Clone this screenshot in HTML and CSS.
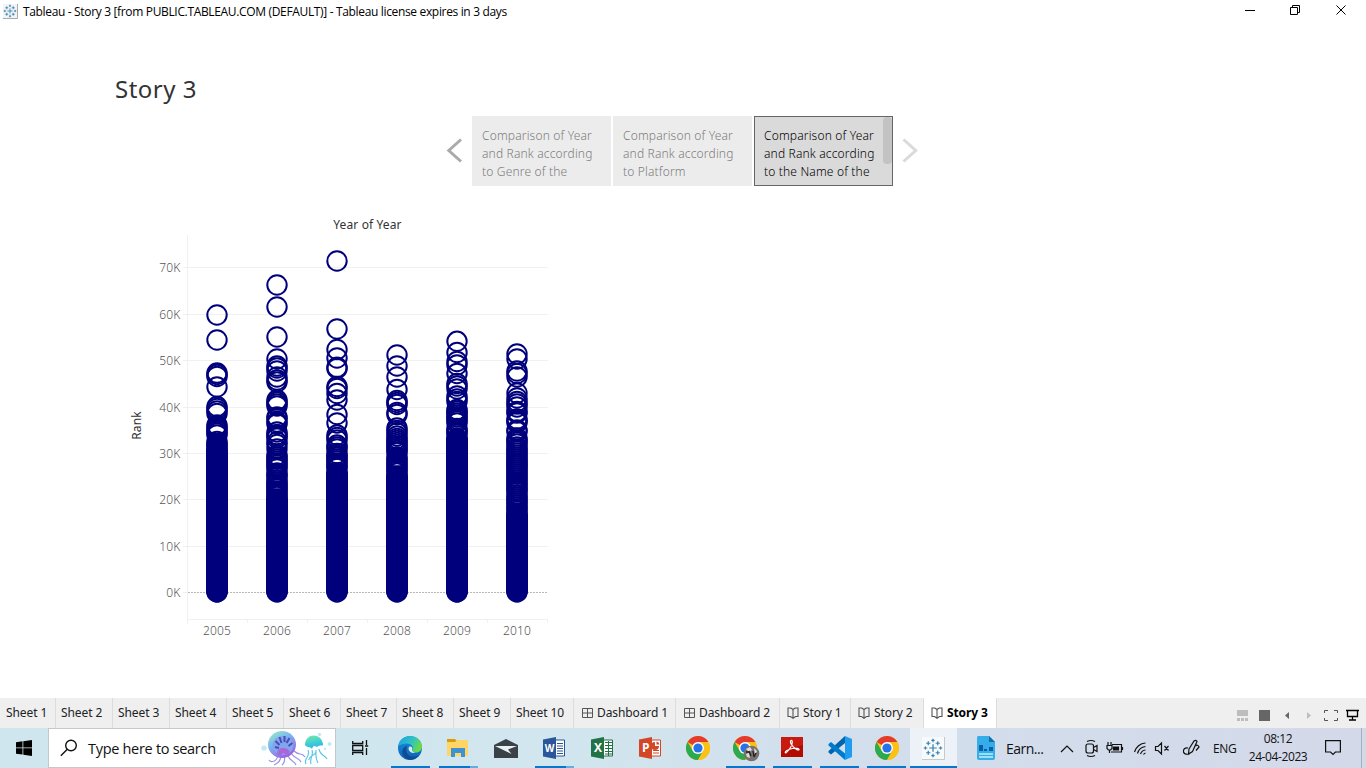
FILE: index.html
```html
<!DOCTYPE html>
<html lang="en">
<head>
<meta charset="utf-8">
<title>Tableau - Story 3</title>
<link rel="stylesheet" href="styles.css">
</head>
<body>
<svg class="defs" width="0" height="0" aria-hidden="true">
  <defs>
    <linearGradient id="bell" x1="0" y1="0" x2=".6" y2="1"><stop offset="0" stop-color="#a0f4b8"/><stop offset=".45" stop-color="#7ab7f3"/><stop offset="1" stop-color="#9a62dc"/></linearGradient>
    <linearGradient id="bell2" x1="0" y1="0" x2=".3" y2="1"><stop offset="0" stop-color="#76ecaa"/><stop offset="1" stop-color="#22b9ec"/></linearGradient>
    <linearGradient id="edgeTop" x1="0" y1="0" x2="1" y2=".4"><stop offset="0" stop-color="#1c9fe0"/><stop offset=".6" stop-color="#2fc2c4"/><stop offset="1" stop-color="#69d84c"/></linearGradient>
    <linearGradient id="edgeLow" x1="0" y1="0" x2="0" y2="1"><stop offset="0" stop-color="#1593de"/><stop offset="1" stop-color="#0c60b8"/></linearGradient>
    <symbol id="chrome" viewBox="0 0 24 24">
      <circle cx="12" cy="12" r="12" fill="#fbc116"/>
      <path d="M12 12 1.600 6A12 12 0 0 1 22.400 6Z" fill="#e33b2e"/>
      <path d="M1.600 6A12 12 0 0 0 12 24L17.200 15 12 12 6.800 15Z" fill="#2da94f"/>
      <path d="M12 6h10.400A12 12 0 0 1 12 24l5.200-9Z" fill="#fbc116"/>
      <circle cx="12" cy="12" r="6" fill="#fff"/><circle cx="12" cy="12" r="4.600" fill="#2672e8"/>
    </symbol>
    <symbol id="tableau" viewBox="0 0 20 20">
      <path d="M10 6v8M6 10h8M10 0v4M8.300 2h3.400M10 16v4M8.300 18h3.400M0 10h4M2 8.300v3.400M16 10h4M18 8.300v3.400M5 2.800v4.400M2.800 5h4.400M15 2.800v4.400M12.800 5h4.400M5 12.800v4.400M2.800 15h4.400M15 12.800v4.400M12.800 15h4.400" fill="none" stroke="#3583b0" stroke-width="1.300"/>
    </symbol>
    <symbol id="grid" viewBox="0 0 12 12"><path d="M1.500 1.500h10v9h-10zM6.500 1.500v9M1.500 6h10" fill="none" stroke="#555"/></symbol>
    <symbol id="book" viewBox="0 0 12 12"><path d="M1 1h2.800L6 2.500 8.200 1H11v8.500H8.500L6 11.300 3.500 9.500H1zM6 2.500v8.500" fill="none" stroke="#555" stroke-width="1.100"/></symbol>
  </defs>
</svg>
<div class="window">
  <header class="titlebar">
    <svg class="app-icon" width="15" height="15" viewBox="0 0 15 15"><path d="M0 0h15v15H0z" fill="#f1f3f4"/><path d="M0 14.500h14.500V0" fill="none" stroke="#aaa"/><use href="#tableau" x=".5" y=".5" width="13" height="13"/></svg>
    <span class="title">Tableau - Story 3 [from PUBLIC.TABLEAU.COM (DEFAULT)] - Tableau license expires in 3 days</span>
    <svg class="controls" width="136" height="22" viewBox="1230 0 136 22" fill="none" stroke="#000"><path d="M1245 10.500h10M1290.500 7.500h7v7h-7zM1292.500 7.500v-2h7v7h-2M1336.500 5.500l9 9M1345.500 5.500l-9 9"/></svg>
  </header>
  <main class="story">
    <h1>Story 3</h1>
    <nav class="points">
      <svg width="26" height="70" viewBox="0 0 26 70"><path d="M15 23.500 2.800 34.500 15 45.500" fill="none" stroke="#aaa" stroke-width="3"/></svg>
      <div class="point">Comparison of Year<br>and Rank according<br>to Genre of the</div>
      <div class="point">Comparison of Year<br>and Rank according<br>to Platform</div>
      <div class="point active">Comparison of Year<br>and Rank according<br>to the Name of the<i class="thumb"></i></div>
      <svg class="next" width="26" height="70" viewBox="0 0 26 70"><path d="M11.500 23.500 23.700 34.500 11.500 45.500" fill="none" stroke="#dadada" stroke-width="3"/></svg>
    </nav>
    <svg class="chart" width="440" height="440" viewBox="120 210 440 440">
      <g stroke="#f0f0f0" fill="none">
        <path d="M187.500 235v389M183 267.500h365M183 314.500h365M183 360.500h365M183 407.500h365M183 453.500h365M183 499.500h365M183 546.500h365M183 592.500h5M187 619.500h361M247.500 619v4M307.500 619v4M367.500 619v4M427.500 619v4M487.500 619v4M547.500 619v4"/>
        <path d="M188 592.500h359" stroke="#b8b8b8" stroke-dasharray="2 1"/>
      </g>
      <g id="marks" class="marks"></g>
      <g class="axis end">
        <text x="180.500" y="272">70K</text><text x="180.500" y="319">60K</text><text x="180.500" y="365">50K</text><text x="180.500" y="412">40K</text><text x="180.500" y="458">30K</text><text x="180.500" y="504">20K</text><text x="180.500" y="551">10K</text><text x="180.500" y="597">0K</text>
      </g>
      <g class="axis mid">
        <text x="217" y="635">2005</text><text x="277" y="635">2006</text><text x="337" y="635">2007</text><text x="397" y="635">2008</text><text x="457" y="635">2009</text><text x="517" y="635">2010</text>
      </g>
      <text class="label" x="367.500" y="229">Year of Year</text>
      <text class="label" transform="translate(141 425.500) rotate(-90)">Rank</text>
    </svg>
  </main>
  <div class="tabs">
    <span class="tab first">Sheet 1</span><span class="tab">Sheet 2</span><span class="tab">Sheet 3</span><span class="tab">Sheet 4</span><span class="tab">Sheet 5</span><span class="tab">Sheet 6</span><span class="tab seven">Sheet 7</span><span class="tab">Sheet 8</span><span class="tab">Sheet 9</span><span class="tab ten">Sheet 10</span>
    <span class="tab dash"><svg width="12" height="12"><use href="#grid"/></svg>Dashboard 1</span><span class="tab dash two"><svg width="12" height="12"><use href="#grid"/></svg>Dashboard 2</span>
    <span class="tab st"><svg width="12" height="12"><use href="#book"/></svg>Story 1</span><span class="tab st two"><svg width="12" height="12"><use href="#book"/></svg>Story 2</span><span class="tab st current"><svg width="12" height="12"><use href="#book"/></svg>Story 3</span>
    <svg class="view-tools" width="136" height="30" viewBox="1230 698 136 30">
      <path d="M1237 710h11v6h-11zM1237 718h3v3h-3zM1241 718h3v3h-3zM1245 718h3v3h-3z" fill="#bdbdbd"/>
      <path d="M1259 710h11v11h-11zM1289 712v7l-4-3.500z" fill="#666"/><path d="M1307 712v7l4-3.500z" fill="#bdbdbd"/>
      <path d="M1324.500 713v-2.500h3.500M1334 710.500h3.500v2.500M1337.500 718v2.500h-3.500M1328 720.500h-3.500v-2.500" fill="none" stroke="#555"/>
      <path d="M1346 710.500h13M1347.500 710.500v6h10v-6M1352.500 716.500v3M1349 720h7" fill="none" stroke="#000" stroke-width="1.300"/>
    </svg>
  </div>
  <footer class="taskbar">
    <div class="start"><svg width="16" height="16" viewBox="0 0 16 16"><path d="M0 2.200 6.500 1.300V7.500H0zM7.300 1.200 16 0v7.500H7.300zM0 8.300h6.500v6.300L0 13.700zM7.300 8.300H16V16l-8.700-1.300z"/></svg></div>
    <div class="search">
      <svg width="18" height="18" viewBox="0 0 18 18" fill="none" stroke="#111" stroke-width="1.400"><circle cx="11" cy="6.500" r="5.300"/><path d="M7.300 10.300.8 16.800"/></svg>
      <span>Type here to search</span>
      <svg class="jelly" width="72" height="36" viewBox="260 730 72 36">
        <g fill="#bfe9f4"><circle cx="264" cy="748" r="2.600"/><circle cx="319.500" cy="734.500" r="1.700"/><circle cx="329.500" cy="744" r="2"/><circle cx="325" cy="749" r="1.200"/></g>
        <path d="M278 755c-1 7-7 8-9 5M281 755c0 6-3 8-7 10M284 755c2 7-1 9-2 10M287 754c3 8 8 7 9 11M291 753c3 6 8 4 10 9M294 751c5 5 8 1 11 6" fill="none" stroke="#9b93e6" stroke-width="1.200"/>
        <ellipse cx="282" cy="744.500" rx="14" ry="13.500" fill="url(#bell)"/>
        <ellipse cx="283" cy="745.500" rx="10.500" ry="9.500" fill="#83a5ee"/>
        <path d="M275 747l4 1M275.500 741l4 4M279.500 737l2 6M284.500 736v6M289.500 738l-3 5M292.500 743l-4 3" stroke="#464fb6" stroke-width="2"/>
        <path d="M277 753q1-5 6-5t7 4l-3 3-4-2-3 3z" fill="#a967d9"/>
        <path d="M308 750c3 7-5 8-2 14M312 750c2 6-3 8-1 14M316 750c0 7-1 8 2 13M319 749c1 7 5 5 8 10M316 752c-1 4-8 4-7 8" fill="none" stroke="#5ac8e7" stroke-width="1.200"/>
        <path d="M305 745c0-12 16-13 18-1 1 3-4 0-6 3-3-2-4-1-5 2-2-3-5-1-7-4z" fill="url(#bell2)"/>
      </svg>
    </div>
    <div class="app taskview"><svg width="17" height="16" viewBox="0 0 17 16" fill="none" stroke="#111" stroke-width="1.300"><path d="M.7 1v2.500h10V1M.7 15v-2.500h10V15M.7 5.500h10v5H.7zM14.500 0v5M14.500 8v7M13 6h3.200"/></svg></div>
    <div class="app run"><svg width="24" height="24" viewBox="0 0 24 24"><circle cx="12" cy="12" r="12" fill="url(#edgeLow)"/><path d="M.2 10C1.500 3.500 6.500 0 12 0c7 0 12 5 12 10.500 0 4-3 6-6.500 6-3 0-4.500-1.200-3-2.500C16 12 14 7.500 9 7.500 5 7.500 1.500 9 .2 10z" fill="url(#edgeTop)"/><path d="M8.500 12c-1.500 6 4 11 12.500 7.500-3 4-9 5.500-13 3C2 18 4 11 9.500 9.500 8.500 10.500 8.500 11 8.500 12z" fill="#134a91"/><path d="M11.500 10.500c2-.5 3.500 1 2.700 3-.5 1.500.5 3 3.300 3-2.500 1-6 .3-6.800-3-.3-1.200 0-2.200.8-3z" fill="#d7edf4"/></svg></div>
    <div class="app run stack"><svg width="22" height="20" viewBox="0 0 22 20"><path d="M0 1h8l2 2v3H0z" fill="#d99a0b"/><path d="M0 4h8l2-2h11v16H0z" fill="#ffd566"/><path d="M4 19v-9h14v9h-4v-4H8v4z" fill="#3d92d4"/></svg></div>
    <div class="app"><svg width="24" height="19" viewBox="0 0 24 19"><path d="M0 6 12 0l12 6v13H0z" fill="#3a4248"/><path d="M1 7h22l-9 3.500 3.500 4.500z" fill="#e9f1f4"/></svg></div>
    <div class="app run stack"><svg width="22" height="22" viewBox="0 0 22 22"><path d="M11 3h10.500v16H11z" fill="#fff" stroke="#2b579a"/><path d="M14 6.500h6M14 9h6M14 11.500h6M14 14h6M14 16.500h6" stroke="#2b579a"/><path d="M0 2.500 13 0v22L0 19.500z" fill="#2b579a"/><text x="1.800" y="15" class="logo">W</text></svg></div>
    <div class="app"><svg width="22" height="22" viewBox="0 0 22 22"><path d="M11 3h10.500v16H11z" fill="#fff" stroke="#217346"/><path d="M14 5.500h7M14 8.500h7M14 11.500h7M14 14.500h7M14 17h7M17.500 4v15" stroke="#217346"/><path d="M0 2.500 13 0v22L0 19.500z" fill="#217346"/><text x="3" y="15" class="logo x">X</text></svg></div>
    <div class="app"><svg width="22" height="22" viewBox="0 0 22 22"><path d="M11 3h10.500v16H11z" fill="#fff" stroke="#d24726"/><path d="M14 13.500h6M14 16h6" stroke="#d24726"/><path d="M16 5v4h4a4 4 0 1 1-4-4zM17.500 4.500a3.500 3.500 0 0 1 3 3h-3z" fill="#d24726"/><path d="M0 2.500 13 0v22L0 19.500z" fill="#d24726"/><text x="3" y="15" class="logo x">P</text></svg></div>
    <div class="app"><svg width="24" height="24"><use href="#chrome"/></svg></div>
    <div class="app narrow run"><svg class="wide" width="28" height="28" viewBox="0 0 28 28"><use href="#chrome" x="1" y="2" width="24" height="24"/><circle cx="19.500" cy="19.500" r="7.800" fill="#77716f"/><path d="M14 15l4-2 2 3-3 2zM22 14l3 3-2 4zM14 20l3-1 1 5-3-1z" fill="#ddd"/><path d="M17 17l2 5M21 17l1 6M24 19l-2 4M14 18h3" stroke="#252020" stroke-width="1.300"/></svg></div>
    <div class="app narrow run"><svg class="up" width="22" height="20" viewBox="0 0 22 20"><path d="M0 0h22v20H0z" fill="#b30b00"/><path d="M0 0h22v8L0 14z" fill="#c91a10"/><path d="M10 3.500c2-1 1.500 4-.5 7s-4 6-5 5.500c-1.500-1 3-4 7-4.500s7-.2 6.500 1.200c-.5 1-4-.7-6-3.200S8.500 4.500 10 3.500z" fill="none" stroke="#fff" stroke-width="1.200"/></svg></div>
    <div class="app narrow run"><svg width="24" height="24" viewBox="0 0 24 24"><path d="M17 0v7L3 18.500.5 16.500V15z" fill="#0065a9"/><path d="M.5 8 3 6l14 11.500V24L.5 9.500z" fill="#007acc"/><path d="M17 0l7 3v18l-7 3z" fill="#1f9cf0"/></svg></div>
    <div class="app narrow run"><svg width="24" height="24"><use href="#chrome"/></svg></div>
    <div class="app narrow run selected"><svg width="23" height="23" viewBox="0 0 23 23"><path d="M0 0h22v22H0z" fill="#f7f9fa"/><path d="M0 22.500h22.500V0" stroke="#c6c9cc" fill="none"/><use href="#tableau" x="1.500" y="1.500" width="19" height="19"/></svg></div>
    <svg class="earn-icon" width="18" height="24" viewBox="0 0 18 24"><path d="M1 0h11l6 6v16q0 2-2 2H2q-2 0-2-2V2Q0 0 1 0z" fill="#35ade8"/><path d="M12 0l6 6h-6z" fill="#136dad"/><path d="M2 9h4v6H2zM7 13h3v2H7zM12 11h4v4h-4z" fill="#0860a8"/><path d="M2 18h14M2 21h14" stroke="#bdefff" stroke-width="1.600"/></svg>
    <span class="earn">Earn...</span>
    <svg class="tray" width="150" height="40" viewBox="1055 728 150 40" fill="none" stroke="#111" stroke-width="1.200">
      <path d="M1061 752l6-6 6 6"/>
      <path d="M1087 741.500q4-2 8 0M1087 755.500q4 2 8 0"/><rect x="1086" y="744" width="7.500" height="9" rx="2"/><path d="M1093.500 747.500l3.500-2v6l-3.500-2"/>
      <path d="M1112 744.500h9.500v7.500H1111M1122.500 747v3M1108 742v3M1111 742v3M1107 745.500h5v3l-1.500 1.500h-2l-1.500-1.500zM1109.500 750v3"/><path d="M1113.500 747h5v3h-5z" fill="#111"/>
      <path d="M1134.500 752a12 12 0 0 1 11-9M1137.500 753.500a9.500 9.500 0 0 1 8-7M1140.500 754a6 6 0 0 1 5-4M1143.500 754.500a3 3 0 0 1 2-1.500"/>
      <path d="M1155.500 746.500v4h2.500l3.500 3.500v-11l-3.500 3.500zM1164.500 746l4 4.500M1168.500 746l-4 4.500"/>
      <path d="M1189 749l5-8q2-1.500 3 .5l-4.500 10-4 2.500zM1188 748q-5-.5-4.500 4 1 3 6 2M1195 746q3-2 4 1l-3 3.500"/>
    </svg>
    <span class="lang">ENG</span>
    <div class="clock"><span>08:12</span><span>24-04-2023</span></div>
    <svg class="note" width="16" height="16" viewBox="0 0 16 16"><path d="M.6.600h14.800v11.400h-5L8 14.500 5.500 12H.6z" fill="none" stroke="#111" stroke-width="1.200"/></svg>
    <i class="show-desktop"></i>
  </footer>
</div>
<script src="marks.js"></script>
</body>
</html>
```
FILE: styles.css
```css
* { box-sizing: border-box; }
body { margin: 0; background: #fff; overflow: hidden; font-family: "Noto Sans", sans-serif; }
.defs { position: absolute; }
.window { display: flex; flex-direction: column; width: 1366px; height: 768px; }
.titlebar { display: flex; align-items: center; height: 22px; padding-left: 3px; flex: none; }
.app-icon { margin-right: 5px; }
.title { font: 12px/22px "Open Sans", "Noto Sans", sans-serif; letter-spacing: -0.34px; white-space: nowrap; color: #000; padding-top: 1px; }
.controls { margin-left: auto; }
.story { flex: 1; display: flex; flex-direction: column; align-items: flex-start; }
h1 { margin: 50px 0 0 115px; font-size: 24px; line-height: 34px; height: 44px; font-weight: 400; color: #333; letter-spacing: 0.5px; }
.points { display: flex; gap: 2px; margin-left: 446px; height: 70px; }
.points > svg:first-child { margin-right: -2px; }
.points .next { margin-left: -3px; }
.point { position: relative; width: 139px; height: 70px; padding: 11px 0 0 10px; background: #ececec; color: #7c7c7c; font-size: 12px; font-weight: 300; line-height: 18px; white-space: nowrap; letter-spacing: 0.17px; }
.point.active { background: #dadada; border: 1px solid #666; padding: 10px 0 0 9px; color: #000; }
.thumb { position: absolute; right: 0; top: 0; width: 9px; height: 47px; border-radius: 4px; background: #c3c3c3; }
.chart { margin: 24px 0 0 120px; }
.marks circle { fill: none; stroke: #00007d; stroke-width: 2px; }
.axis text { font-size: 12px; font-weight: 300; fill: #555; letter-spacing: 0.2px; }
.end text { text-anchor: end; }
.mid text { text-anchor: middle; }
.label { font-size: 12px; fill: #333; text-anchor: middle; letter-spacing: 0.12px; }
.tabs { display: flex; height: 30px; flex: none; background: #efefef; }
.tab { display: flex; align-items: center; gap: 4px; width: 57px; padding: 0 0 1px 5px; border-right: 1px solid #dcdcdc; font-size: 12px; letter-spacing: -0.1px; color: #222; white-space: nowrap; }
.tab.first { width: 56px; padding-left: 6px; }
.tab.seven { width: 56px; }
.tab.ten { width: 63px; }
.tab.dash { width: 102px; padding-left: 7px; }
.tab.dash.two { width: 104px; }
.tab.st { width: 71px; padding-left: 7px; }
.tab.st.two { width: 73px; }
.tab.st.current { width: 73px; background: #fff; font-weight: 700; color: #000; }
.view-tools { margin-left: auto; }
.taskbar { display: flex; align-items: center; height: 40px; flex: none; background: linear-gradient(90deg, #cfe6ee 0%, #d1e6ee 40%, #d2dfed 60%, #d3dbea 85%, #d4d9ea 100%); color: #111; font-family: "Open Sans", "Noto Sans", sans-serif; }
.start { width: 48px; display: flex; justify-content: center; }
.search { width: 288px; height: 40px; display: flex; align-items: center; background: #fff; border: 1px solid #c3c8ca; padding-left: 11px; font-size: 14.500px; letter-spacing: -0.3px; }
.search span { margin-left: 10px; white-space: nowrap; }
.jelly { margin-left: auto; margin-right: 3px; }
.app { position: relative; width: 48px; height: 40px; display: flex; align-items: center; justify-content: center; flex: none; }
.taskview { margin-right: 2px; }
.narrow { width: 47px; }
.run::after { content: ""; position: absolute; left: 5px; right: 4px; bottom: 0; height: 2px; background: #0078d4; }
.narrow::after { left: 4px; }
.stack::after { background: linear-gradient(90deg, #0078d4 31px, #62ade4 31px); }
.selected { background: #ecf2f7; }
.narrow.selected::after { left: 0; right: 0; }
.up { margin: 0 2px 2px 0; }
.logo { font: 700 10px "Open Sans", sans-serif; fill: #fff; }
.logo.x { font-size: 12px; }
.earn-icon { margin-left: 20px; }
.earn { width: 49px; margin-left: 11px; font-size: 14px; letter-spacing: -0.5px; }
.lang { width: 26px; margin-left: 8px; font-size: 12px; letter-spacing: -0.4px; }
.clock { width: 80px; display: flex; flex-direction: column; text-align: center; font-size: 12px; line-height: 18px; letter-spacing: -0.4px; height: 38px; margin-left: -1px; padding-top: 1px; }
.note { margin-left: 7px; }
.show-desktop { margin-left: auto; margin-right: 4px; width: 1px; height: 40px; background: #a6adbd; }
```
FILE: marks.js
```js
// Vertical mark positions per year; below "solid" the marks overlap completely.
const columns = [
  { x: 217, solid: 451, y: [315, 340, 373, 374.5, 376.5, 387, 406.5, 408.5, 411, 413.5, 425, 427, 429, 431, 433, 435, 441.500, 443.500, 445, 447, 449] },
  { x: 277, solid: 499, y: [285, 307, 337, 359, 366, 368, 371, 377, 380, 382, 400, 402, 404, 406, 417, 418.5, 422, 424, 432, 434.5, 436, 438, 442, 444.5, 449, 455, 457, 459, 461, 463, 465, 467, 469, 473, 475, 476.500, 480, 482, 484, 485.500, 487.500, 489, 491, 493, 495, 496.500] },
  { x: 337, solid: 473, y: [261, 329, 349.5, 358, 367.3, 368.5, 386.5, 388.5, 393.5, 400, 414.5, 423, 435, 437.5, 440, 445, 447, 449, 453.500, 455.500, 457, 459, 461, 463, 465, 467, 468.500] },
  { x: 397, solid: 476, y: [355, 366, 377, 389.5, 400.5, 402.5, 404.5, 412.5, 414.5, 428, 430.5, 433, 436, 438.5, 440.5, 442.5, 444.5, 446.5, 448.5, 450.5, 452.5, 457, 459, 461, 463, 465, 467, 469, 471, 473] },
  { x: 457, solid: 438.5, y: [341.3, 352.5, 361.5, 365, 373.5, 383.5, 386, 389, 396, 399, 401.5, 409.5, 411, 413, 415, 417, 419, 421, 423, 428.5, 430.5, 432.5, 434] },
  { x: 517, solid: 515, y: [354, 359, 371, 373.5, 377, 393, 398, 401.5, 404, 407, 411.5, 413, 419, 421, 422.5, 430, 431.5, 438, 440, 442, 444, 447, 449, 451, 453, 455, 457, 459, 461, 463, 464.500, 466, 468, 470, 472, 474, 476, 478, 480, 482, 484, 486, 488, 490, 491.500, 495, 497, 499, 501, 503, 505, 507, 509, 511, 513] }
];
const marks = document.getElementById("marks");
function addMark(x, y) {
  const circle = document.createElementNS("http://www.w3.org/2000/svg", "circle");
  circle.setAttribute("cx", x);
  circle.setAttribute("cy", y);
  circle.setAttribute("r", 9.7);
  marks.appendChild(circle);
}
for (const column of columns) {
  column.y.forEach(y => addMark(column.x, y));
  for (let y = column.solid; y <= 592; y += 0.7) addMark(column.x, y);
  addMark(column.x, 592);
}
```
